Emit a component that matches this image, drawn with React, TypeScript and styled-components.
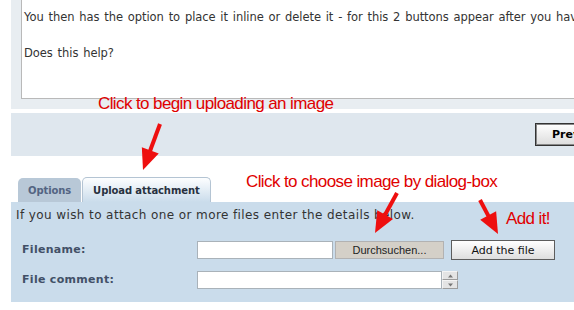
import React from 'react';
import styled, { createGlobalStyle } from 'styled-components';

const Global = createGlobalStyle`
  html, body {
    margin: 0;
    padding: 0;
    background: #fff;
    overflow: hidden;
  }
`;

const Page = styled.div`
  position: relative;
  width: 760px;
  padding-left: 11px;
  font-family: "DejaVu Sans", Verdana, sans-serif;
`;

const TopPanel = styled.div`
  height: 109px;
  padding-left: 10px;
  background: #e8edf1;
`;

const TextBox = styled.div`
  height: 99px;
  box-sizing: border-box;
  padding: 8px 2px 0;
  background: #fff;
  border-left: 1px solid #b9b9b9;
  border-bottom: 1px solid #b9b9b9;
  color: #333;
  font-size: 11.5px;
  letter-spacing: -0.05px;
  word-spacing: 1.2px;
  line-height: 18px;
  white-space: pre;
`;

const ButtonBar = styled.div`
  margin-top: 4px;
  height: 43px;
  display: flex;
  align-items: center;
  padding-left: 524px;
  background: #dfe7ee;
`;

const SubmitButton = styled.button`
  height: 23px;
  padding: 0 16px;
  border: 1px solid #333;
  outline: 1px solid #888;
  outline-offset: -2px;
  background: linear-gradient(#fff, #dcdcdc);
  font-family: "DejaVu Sans", Verdana, sans-serif;
  font-weight: bold;
  font-size: 11px;
  color: #000;
`;

const TabRow = styled.div`
  margin-top: 21px;
  height: 25px;
  display: flex;
  align-items: flex-end;
  gap: 1px;
  padding-left: 7px;
`;

const Tab = styled.div<{ $active?: boolean }>`
  box-sizing: border-box;
  height: ${p => (p.$active ? '25px' : '24px')};
  padding: 0 10px;
  display: flex;
  align-items: center;
  padding-top: ${p => (p.$active ? '1px' : '0')};
  border-radius: 5px 5px 0 0;
  font-size: 10px;
  font-weight: bold;
  letter-spacing: -0.1px;
  color: ${p => (p.$active ? '#28313f' : '#536482')};
  background: ${p => (p.$active ? 'linear-gradient(#fdfeff, #cadceb)' : '#b8c8d7')};
  border: ${p => (p.$active ? '1px solid #b4c4d3' : 'none')};
  border-bottom: none;
`;

const PanelBody = styled.div`
  background: #cadceb;
  padding: 6px 0 12px 5px;
  color: #333;
`;

const Intro = styled.div`
  font-size: 12px;
  line-height: 15px;
  letter-spacing: 0.4px;
`;

const Fields = styled.div`
  margin-top: 17px;
  padding-left: 6px;
  display: grid;
  grid-template-columns: 175px auto;
  row-gap: 10px;
  align-items: center;
`;

const Label = styled.div`
  font-size: 11px;
  font-weight: bold;
  letter-spacing: 0.3px;
  color: #425067;
  margin-top: -2px;
`;

const FieldRow = styled.div`
  height: 20px;
  display: flex;
  align-items: center;
`;

const TextInput = styled.div<{ $width: number }>`
  box-sizing: border-box;
  width: ${p => p.$width}px;
  height: 18px;
  background: #fff;
  border: 1px solid #a9b2b9;
`;

const BrowseButton = styled.div`
  box-sizing: border-box;
  width: 109px;
  height: 18px;
  margin-left: 2px;
  display: flex;
  align-items: center;
  justify-content: center;
  background: #d4d0c8;
  border: 1px solid #b2b2b2;
  font-family: "Liberation Sans", Arial, sans-serif;
  font-size: 11px;
  color: #222;
`;

const AddButton = styled.div`
  box-sizing: border-box;
  width: 104px;
  height: 20px;
  margin-left: 7px;
  display: flex;
  align-items: center;
  justify-content: center;
  background: linear-gradient(#fff, #dedede);
  border: 1px solid #5d5d5d;
  font-size: 11px;
  color: #111;
`;

const Spinner = styled.div`
  width: 16px;
  height: 18px;
  display: flex;
  flex-direction: column;
`;

const SpinHalf = styled.div`
  box-sizing: border-box;
  flex: 1;
  display: flex;
  align-items: center;
  justify-content: center;
  background: #e4e4e4;
  border: 1px solid #9c9c9c;
  border-top-color: #f4f4f4;
  border-left-color: #f4f4f4;
`;

const Note = styled.div<{ $x: number; $y: number }>`
  position: absolute;
  left: ${p => p.$x}px;
  top: ${p => p.$y}px;
  font-family: "Liberation Sans", Arial, sans-serif;
  font-size: 17px;
  line-height: 17px;
  letter-spacing: -0.6px;
  color: #e00000;
  white-space: nowrap;
`;

const Overlay = styled.svg`
  position: absolute;
  left: 0;
  top: 0;
  width: 100%;
  height: 100%;
  pointer-events: none;
`;

const Arrow = ({ x1, y1, x2, y2 }: { x1: number; y1: number; x2: number; y2: number }) => {
  const len = Math.hypot(x2 - x1, y2 - y1);
  const ux = (x2 - x1) / len;
  const uy = (y2 - y1) / len;
  const bx = x2 - ux * 21;
  const by = y2 - uy * 21;
  const px = -uy * 9;
  const py = ux * 9;
  return (
    <g fill="#ee0f0f" stroke="#ee0f0f">
      <line x1={x1} y1={y1} x2={bx + ux} y2={by + uy} strokeWidth={4} />
      <polygon points={`${x2},${y2} ${bx + px},${by + py} ${bx - px},${by - py}`} strokeWidth={0} />
    </g>
  );
};

const Arrowhead = ({ up }: { up?: boolean }) => (
  <svg width="7" height="4" viewBox="0 0 7 4">
    <path d={up ? 'M3.5 0.5 L6 3.5 L1 3.5 Z' : 'M1 0.5 L6 0.5 L3.5 3.5 Z'} fill="#777" />
  </svg>
);

export default function App() {
  return (
    <Page>
      <Global />
      <TopPanel>
        <TextBox>
          {'You then has the option to place it inline or delete it - for this 2 buttons appear after you have added the file.\n\nDoes this help?'}
        </TextBox>
      </TopPanel>

      <ButtonBar>
        <SubmitButton>Preview</SubmitButton>
      </ButtonBar>

      <TabRow>
        <Tab>Options</Tab>
        <Tab $active>Upload attachment</Tab>
      </TabRow>

      <PanelBody>
        <Intro>If you wish to attach one or more files enter the details below.</Intro>
        <Fields>
          <Label>Filename:</Label>
          <FieldRow>
            <TextInput $width={136} />
            <BrowseButton>Durchsuchen...</BrowseButton>
            <AddButton>Add the file</AddButton>
          </FieldRow>
          <Label>File comment:</Label>
          <FieldRow>
            <TextInput $width={245} />
            <Spinner>
              <SpinHalf><Arrowhead up /></SpinHalf>
              <SpinHalf><Arrowhead /></SpinHalf>
            </Spinner>
          </FieldRow>
        </Fields>
      </PanelBody>

      <Note $x={98} $y={95}>Click to begin uploading an image</Note>
      <Note $x={246} $y={173}>Click to choose image by dialog-box</Note>
      <Note $x={506} $y={210}>Add it!</Note>

      <Overlay>
        <Arrow x1={160} y1={124} x2={143} y2={170} />
        <Arrow x1={397} y1={193} x2={375} y2={233} />
        <Arrow x1={480} y1={200} x2={498} y2={234} />
      </Overlay>
    </Page>
  );
}
